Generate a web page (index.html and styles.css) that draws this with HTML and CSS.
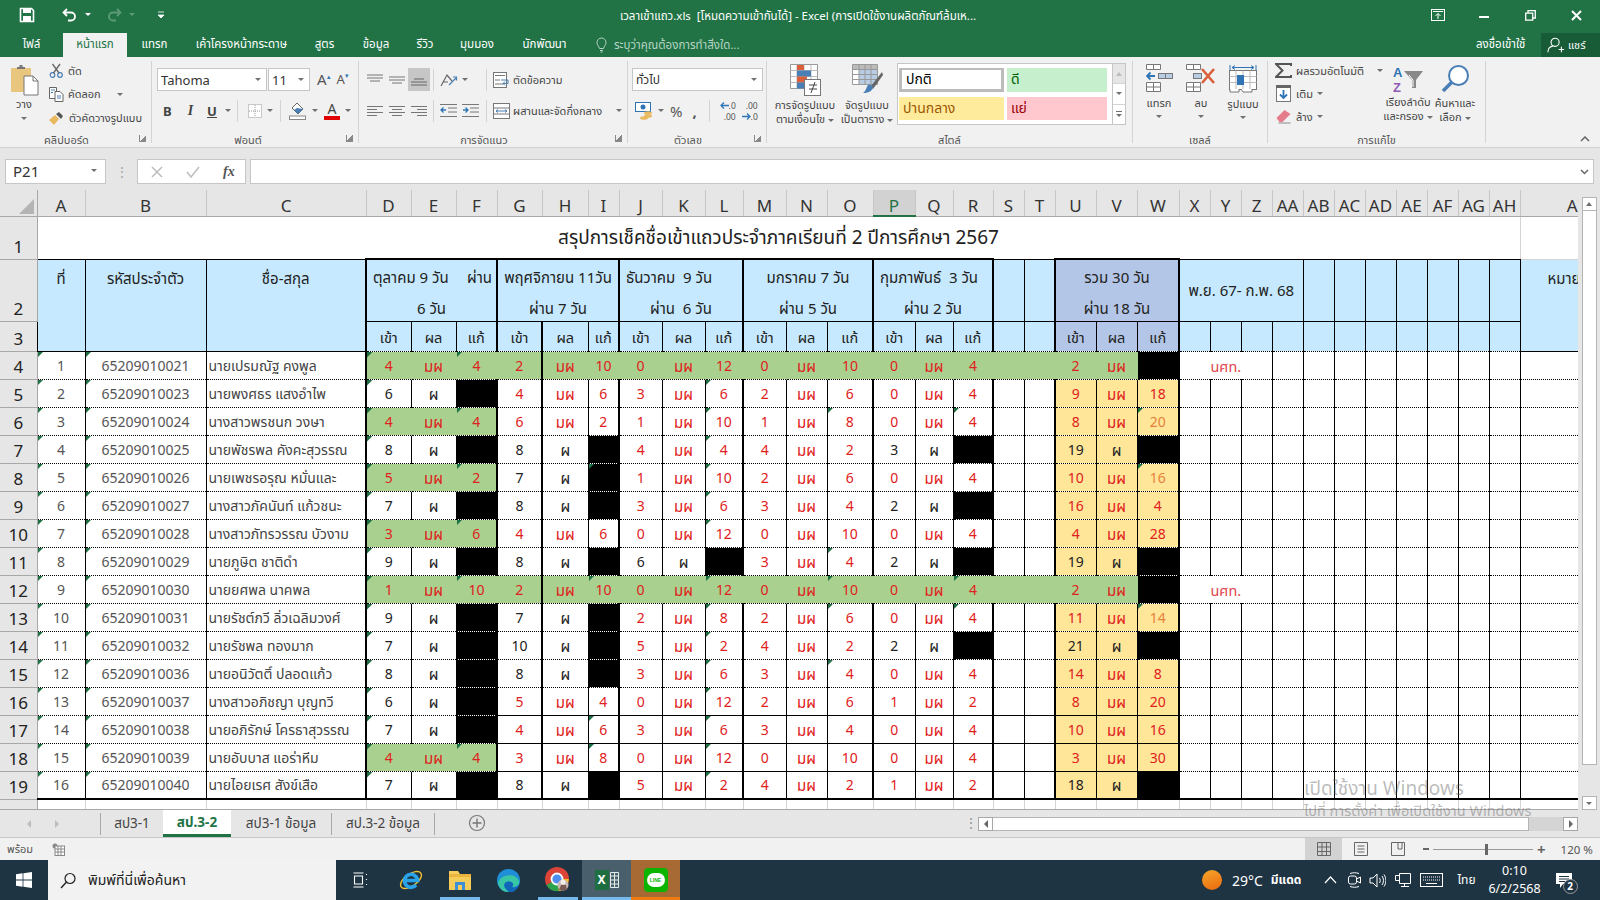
FILE: index.html
```html
<!DOCTYPE html>
<html lang="th">
<head>
    <meta charset="UTF-8">
    <title>เวลาเข้าแถว.xls - Excel</title>
    <link rel="stylesheet" href="styles.css">
</head>
<body>
    <header class="titlebar">
        <div class="qat">
            <svg class="qat-save" width="16" height="16" viewBox="0 0 16 16"><path d="M1.5 1.5h11l2 2v11h-13z" fill="none" stroke="#fff" stroke-width="1.6"/><rect x="4" y="2" width="8" height="4" fill="#fff"/><rect x="4" y="9" width="8" height="5" fill="#fff"/></svg>
            <svg class="qat-undo" width="16" height="14" viewBox="0 0 16 14"><path d="M5 1 1.5 4.5 5 8" fill="none" stroke="#fff" stroke-width="1.8"/><path d="M2 4.5h7a4 4 0 0 1 0 8H6" fill="none" stroke="#fff" stroke-width="1.8"/></svg>
            <i class="caret white"></i>
            <svg class="qat-redo" width="16" height="14" viewBox="0 0 16 14"><path d="M11 1l3.5 3.5L11 8" fill="none" stroke="#5d9a78" stroke-width="1.8"/><path d="M14 4.5H7a4 4 0 0 0 0 8h3" fill="none" stroke="#5d9a78" stroke-width="1.8"/></svg>
            <i class="caret dim"></i>
            <svg class="qat-more" width="8" height="8" viewBox="0 0 8 8"><path d="M1 1h6M1 4h6l-3 3z" fill="#fff" stroke="#fff" stroke-width=".8"/></svg>
        </div>
        <div class="doc-title">เวลาเข้าแถว.xls &nbsp;[โหมดความเข้ากันได้] - Excel (การเปิดใช้งานผลิตภัณฑ์ล้มเห...</div>
        <div class="winctl">
            <svg width="14" height="12" viewBox="0 0 14 12"><rect x=".5" y=".5" width="13" height="11" fill="none" stroke="#fff"/><path d="M2 2.5h10M7 10V4.5M4.5 7 7 4.5 9.5 7" fill="none" stroke="#fff"/></svg>
            <svg class="win-min" width="10" height="10" viewBox="0 0 10 10"><path d="M0 7h10" stroke="#fff" stroke-width="2"/></svg>
            <svg class="win-max" width="11" height="11" viewBox="0 0 11 11"><path d="M.7 3.2h7v7h-7zM3 3V.7h7.3V8H8" fill="none" stroke="#fff" stroke-width="1.3"/></svg>
            <svg class="win-close" width="11" height="11" viewBox="0 0 11 11"><path d="M1 1l9 9M10 1l-9 9" stroke="#fff" stroke-width="2"/></svg>
        </div>
    </header>

    <nav class="tabs">
        <span>ไฟล์</span>
        <span class="active">หน้าแรก</span>
        <span>แทรก</span>
        <span>เค้าโครงหน้ากระดาษ</span>
        <span>สูตร</span>
        <span>ข้อมูล</span>
        <span>รีวิว</span>
        <span>มุมมอง</span>
        <span>นักพัฒนา</span>
        <div class="tellme">
            <svg width="11" height="16" viewBox="0 0 11 16"><path d="M3.5 11.5C3 9 1 8.5 1 5.5a4.5 4.5 0 0 1 9 0c0 3-2 3.5-2.5 6zM4 13.5h3M4.5 15h2" fill="none" stroke="#b7d3c3" stroke-width="1"/></svg>
            <span>ระบุว่าคุณต้องการทำสิ่งใด...</span>
        </div>
        <span class="signin">ลงชื่อเข้าใช้</span>
        <div class="share">
            <svg width="18" height="18" viewBox="0 0 20 18"><circle cx="9" cy="6" r="4.5" fill="none" stroke="#fff" stroke-width="1.2"/><path d="M1 17c0-4 3-6.5 6-7M13 14h6M16 11v6" fill="none" stroke="#fff" stroke-width="1.2"/></svg>
            <span>แชร์</span>
        </div>
    </nav>

    <section class="ribbon">
        <div class="group g-clip">
            <div class="group-body">
                <div class="paste">
                    <svg width="29" height="31" viewBox="0 0 29 31"><path d="M1 3h20v24H1z" fill="#e9c67e"/><path d="M7 4V2h2.5V0h3v2H15v2z" fill="#777"/><path d="M14 11h9l5 5v14H14z" fill="#fff" stroke="#777"/><path d="M23 11v5h5" fill="none" stroke="#777"/></svg>
                    <span class="big-label">วาง</span>
                    <i class="caret"></i>
                </div>
                <div class="clip-list">
                    <div class="clip-row">
                        <svg width="15" height="15" viewBox="0 0 15 15"><g fill="none" stroke="#4a7fb5" stroke-width="1.2"><circle cx="3.5" cy="12" r="2.3"/><circle cx="11" cy="12" r="2.3"/></g><path d="M4.5 10 11 1M10 10 3.5 1" stroke="#666" stroke-width="1.3"/></svg>
                        <span>ตัด</span>
                    </div>
                    <div class="clip-row">
                        <svg width="15" height="15" viewBox="0 0 15 15"><g fill="#fff" stroke="#666"><path d="M.5.5h7v11h-7z"/><path d="M6 4.5h5l3 3v7H6z"/></g><path d="M2 3h4M2 5.5h2M8 9h4M8 11h4" stroke="#4a7fb5"/></svg>
                        <span>คัดลอก</span><i class="caret gap12"></i>
                    </div>
                    <div class="clip-row">
                        <svg width="16" height="14" viewBox="0 0 16 14"><path d="M0 9l6-5 4 4-5 6z" fill="#e9b95f"/><path d="M7 3l3-2 4 4-2 3z" fill="#555"/></svg>
                        <span>ตัวคัดวางรูปแบบ</span>
                    </div>
                </div>
            </div>
            <div class="group-label">คลิปบอร์ด<i class="launcher"></i></div>
        </div>

        <div class="group g-font">
            <div class="group-body stack">
                <div class="font-row">
                    <div class="combo font-name">Tahoma<i class="caret"></i></div>
                    <div class="combo font-size">11<i class="caret"></i></div>
                    <span class="grow-a">A<sup>▴</sup></span>
                    <span class="shrink-a">A<sup>▾</sup></span>
                </div>
                <div class="fmt-row">
                    <b class="f-b">B</b><em class="f-i">I</em><u class="f-u">U</u><i class="caret"></i>
                    <i class="vsep"></i>
                    <svg width="14" height="14" viewBox="0 0 14 14"><rect x=".5" y=".5" width="13" height="13" fill="#fff" stroke="#999" stroke-dasharray="1 1"/><path d="M7 1v12M1 7h12" stroke="#999" stroke-dasharray="1 1"/></svg>
                    <i class="caret"></i>
                    <i class="vsep"></i>
                    <svg width="18" height="18" viewBox="0 0 18 18"><path d="M8 1l6 6-5 5-6-6z" fill="#fff" stroke="#666"/><path d="M8 6l6 1-5 5-4-4z" fill="#4a7fb5"/><rect x=".5" y="14" width="16" height="3.5" fill="#fff" stroke="#888"/></svg>
                    <i class="caret"></i>
                    <span class="f-color">A</span>
                    <i class="caret"></i>
                </div>
            </div>
            <div class="group-label">ฟอนต์<i class="launcher"></i></div>
        </div>

        <div class="group g-align">
            <div class="group-body stack">
                <div class="align-row">
                    <span class="cell-btn"><svg width="16" height="12" viewBox="0 0 16 12"><path d="M0 1h16M0 4h16M3 7h10" stroke="#777"/></svg></span>
                    <span class="cell-btn"><svg width="16" height="12" viewBox="0 0 16 12"><path d="M0 3h16M0 6h16M3 9h10" stroke="#777"/></svg></span>
                    <span class="cell-btn on"><svg width="16" height="12" viewBox="0 0 16 12"><path d="M3 5h10M0 8h16M0 11h16" stroke="#666"/></svg></span>
                    <i class="vsep"></i>
                    <span class="orient">
                        <svg width="18" height="16" viewBox="0 0 18 16"><path d="M1 14 7 3l5 6M3 10l5 0" fill="none" stroke="#666" stroke-width="1.2"/><path d="M9 13l7-7M13 5h3.5v3.5" fill="none" stroke="#4a7fb5" stroke-width="1.2"/></svg>
                        <i class="caret"></i>
                    </span>
                    <i class="vsep"></i>
                    <span class="wide-btn">
                        <svg width="17" height="16" viewBox="0 0 17 16"><rect x=".5" y=".5" width="13" height="15" fill="#fff" stroke="#777"/><path d="M2 3.5h10M2 8h5M2 12h8" stroke="#777"/><path d="M8 8h7v3.5H10M12 9.5 10 11.5l2 2" fill="none" stroke="#4a7fb5"/></svg>
                        ตัดข้อความ
                    </span>
                </div>
                <div class="align-row">
                    <span class="cell-btn"><svg width="16" height="12" viewBox="0 0 16 12"><path d="M0 1.5h16M0 4.5h10M0 7.5h16M0 10.5h10" stroke="#777"/></svg></span>
                    <span class="cell-btn"><svg width="16" height="12" viewBox="0 0 16 12"><path d="M0 1.5h16M3 4.5h10M0 7.5h16M3 10.5h10" stroke="#777"/></svg></span>
                    <span class="cell-btn"><svg width="16" height="12" viewBox="0 0 16 12"><path d="M0 1.5h16M6 4.5h10M0 7.5h16M6 10.5h10" stroke="#777"/></svg></span>
                    <i class="vsep"></i>
                    <span class="orient indent">
                        <svg width="17" height="13" viewBox="0 0 17 13"><path d="M0 .5h17M8 4h9M8 8h9M0 12.5h17" stroke="#777"/><path d="M6 6H1M3.5 3.5 1 6l2.5 2.5" fill="none" stroke="#2f75b5" stroke-width="1.3"/></svg>
                        <svg width="17" height="13" viewBox="0 0 17 13"><path d="M0 .5h17M8 4h9M8 8h9M0 12.5h17" stroke="#777"/><path d="M1 6h5M3.5 3.5 6 6 3.5 8.5" fill="none" stroke="#2f75b5" stroke-width="1.3"/></svg>
                    </span>
                    <i class="vsep"></i>
                    <span class="wide-btn">
                        <svg width="17" height="16" viewBox="0 0 17 16"><rect x=".5" y=".5" width="16" height="15" fill="#fff" stroke="#777"/><path d="M.5 5h16M.5 11h16" stroke="#777"/><path d="M3 8h11M5 6.5 3 8l2 1.5M12 6.5 14 8l-2 1.5" fill="none" stroke="#4a7fb5"/></svg>
                        ผสานและจัดกึ่งกลาง<i class="caret gap12"></i>
                    </span>
                </div>
            </div>
            <div class="group-label">การจัดแนว<i class="launcher"></i></div>
        </div>

        <div class="group g-number">
            <div class="group-body stack">
                <div class="combo num-format">ทั่วไป<i class="caret"></i></div>
                <div class="num-row">
                    <svg width="18" height="18" viewBox="0 0 18 18"><rect x=".5" y=".5" width="15" height="9" fill="#fff" stroke="#2f75b5"/><circle cx="8" cy="5" r="2.5" fill="#2f75b5"/><ellipse cx="13" cy="11" rx="4" ry="1.8" fill="#e9b95f"/><ellipse cx="13" cy="14" rx="4" ry="1.8" fill="#e9b95f"/><ellipse cx="9" cy="16" rx="4" ry="1.8" fill="#e9b95f"/></svg>
                    <i class="caret"></i>
                    <span class="pct">%</span>
                    <span class="comma">,</span>
                    <i class="vsep"></i>
                    <span class="dec">
                        <span class="dec-line"><svg width="9" height="7" viewBox="0 0 9 7"><path d="M9 3.5H1M4 .5l-3 3 3 3" fill="none" stroke="#2f75b5" stroke-width="1.3"/></svg>.0</span>
                        <span class="dec-line">.00</span>
                    </span>
                    <span class="dec">
                        <span class="dec-line">.00</span>
                        <span class="dec-line"><svg width="9" height="7" viewBox="0 0 9 7"><path d="M0 3.5h8M5 .5l3 3-3 3" fill="none" stroke="#2f75b5" stroke-width="1.3"/></svg>.0</span>
                    </span>
                </div>
            </div>
            <div class="group-label">ตัวเลข<i class="launcher"></i></div>
        </div>

        <div class="group g-style">
            <div class="group-body">
                <div class="big-btn w-cond">
                    <svg width="31" height="32" viewBox="0 0 31 32"><path d="M.5.5h27v24H.5z" fill="#fff" stroke="#999"/><path d="M7 .5v24M14 .5v24M21 .5v24M.5 6.5h27M.5 12.5h27M.5 18.5h27" stroke="#bbb"/><rect x="7" y="1" width="7" height="5" fill="#d9603b"/><rect x="7" y="6.5" width="14" height="6" fill="#4a7fb5"/><rect x="7" y="12.5" width="10" height="6" fill="#d9603b"/><rect x="7" y="18.5" width="7" height="6" fill="#4a7fb5"/><rect x="14.5" y="15.5" width="16" height="16" fill="#fff" stroke="#777"/><path d="M19 21h8M19 25h8M25 18l-4 11" stroke="#444" fill="none"/></svg>
                    <span>การจัดรูปแบบ</span>
                    <span>ตามเงื่อนไข<i class="caret gap3"></i></span>
                </div>
                <div class="big-btn w-table">
                    <svg width="31" height="32" viewBox="0 0 31 32"><path d="M.5.5h25v20H.5z" fill="#fff" stroke="#999"/><rect x="1" y="1" width="24" height="4" fill="#bbb"/><rect x="7" y="6" width="18" height="14" fill="#b8cce4"/><path d="M7 .5v20M13 .5v20M19 .5v20M.5 5.5h25M.5 10.5h25M.5 15.5h25" stroke="#999"/><path d="M30 8 19 22l2 3L31 11z" fill="#666"/><path d="M16 21c3-1 5 1 5 3-1 3-5 5-10 5 3-2 3-5 5-8z" fill="#4a7fb5"/></svg>
                    <span>จัดรูปแบบ</span>
                    <span>เป็นตาราง<i class="caret gap3"></i></span>
                </div>
                <div class="gallery">
                    <div class="gallery-cells">
                        <span class="st-normal">ปกติ</span>
                        <span class="st-good">ดี</span>
                        <span class="st-neutral">ปานกลาง</span>
                        <span class="st-bad">แย่</span>
                    </div>
                    <div class="gallery-scroll">
                        <span><i class="caret up dim2"></i></span>
                        <span><i class="caret"></i></span>
                        <span class="last"><i class="bar"></i><i class="caret"></i></span>
                    </div>
                </div>
            </div>
            <div class="group-label">สไตล์</div>
        </div>

        <div class="group g-cells">
            <div class="group-body">
                <div class="big-btn w-cell">
                    <svg width="27" height="28" viewBox="0 0 27 28"><g fill="#fff" stroke="#777"><path d="M.5.5h7v5h-7zM7.5.5h7v5h-7z"/><path d="M.5 18.5h7v9h-7zM7.5 18.5h7v9h-7z"/><path d="M.5 23h14"/></g><path d="M1 12h8M4.5 8.5 1 12l3.5 3.5" fill="none" stroke="#2f75b5" stroke-width="1.8"/><g fill="#b8cce4" stroke="#777"><rect x="12.5" y="9.5" width="7" height="5"/><rect x="19.5" y="9.5" width="7" height="5"/></g></svg>
                    <span>แทรก</span>
                    <i class="caret low"></i>
                </div>
                <div class="big-btn w-cell">
                    <svg width="30" height="28" viewBox="0 0 30 28"><g fill="#fff" stroke="#777"><path d="M.5.5h7v5h-7zM7.5.5h7v5h-7z"/><path d="M.5 18.5h7v9h-7zM7.5 18.5h7v9h-7z"/><path d="M.5 23h14"/></g><rect x="7.5" y="9.5" width="8" height="5" fill="#b8cce4" stroke="#777"/><path d="M16 5l12 14M28 5 16 19" stroke="#d9603b" stroke-width="2.6"/></svg>
                    <span>ลบ</span>
                    <i class="caret low"></i>
                </div>
                <div class="big-btn w-cell">
                    <svg width="28" height="29" viewBox="0 0 28 29"><path d="M1 1v5M27 1v5" stroke="#2f75b5"/><path d="M3 3.5h22M6 1.5 3 3.5l3 2M22 1.5l3 2-3 2" fill="none" stroke="#2f75b5"/><rect x=".5" y="6.5" width="27" height="19" fill="#fff" stroke="#777"/><path d="M7 6.5v19M14 6.5v19M21 6.5v19M.5 12.5h27M.5 18.5h27" stroke="#bbb"/><rect x="8" y="11" width="7" height="10" fill="#2f75b5"/><path d="M1 25v3h9v-3M12 25l2 3h9v-3" fill="#fff" stroke="#777"/></svg>
                    <span>รูปแบบ</span>
                    <i class="caret low"></i>
                </div>
            </div>
            <div class="group-label">เซลล์</div>
        </div>

        <div class="group g-edit">
            <div class="group-body">
                <div class="edit-list">
                    <div class="edit-row">
                        <svg width="17" height="15" viewBox="0 0 17 15"><path d="M16 3V1H1l6.5 6.5L1 14h15v-2" fill="none" stroke="#555" stroke-width="2"/></svg>
                        <span>ผลรวมอัตโนมัติ</span><i class="caret gap-sum"></i>
                    </div>
                    <div class="edit-row">
                        <svg width="15" height="17" viewBox="0 0 15 17"><rect x=".5" y=".5" width="14" height="16" fill="#fff" stroke="#777"/><rect x="0" y="0" width="15" height="3" fill="#666"/><path d="M7.5 5v8M4 9.5l3.5 3.5L11 9.5" fill="none" stroke="#2f75b5" stroke-width="1.8"/></svg>
                        <span>เติม</span><i class="caret"></i>
                    </div>
                    <div class="edit-row">
                        <svg width="16" height="15" viewBox="0 0 16 15"><path d="M1 9l8-8 6 4-8 8H4z" fill="#e57b8b"/><path d="M3 14h12" stroke="#888"/></svg>
                        <span>ล้าง</span><i class="caret"></i>
                    </div>
                </div>
                <div class="big-btn w-sort">
                    <svg width="31" height="29" viewBox="0 0 31 29"><text x="0" y="13" class="sort-a">A</text><text x="0" y="28" class="sort-z">Z</text><path d="M11 7h19l-7 9v8h-4v-8z" fill="#888"/><path d="M16 11l4 5v7" fill="none" stroke="#fff"/></svg>
                    <span>เรียงลำดับ</span>
                    <span>และกรอง<i class="caret gap3"></i></span>
                </div>
                <div class="big-btn w-find">
                    <svg width="29" height="30" viewBox="0 0 29 30"><circle cx="17.5" cy="11.5" r="9.5" fill="#fff" stroke="#4a7fb5" stroke-width="2"/><path d="M10.5 18.5 2 27" stroke="#4a7fb5" stroke-width="3.5"/></svg>
                    <span>ค้นหาและ</span>
                    <span>เลือก<i class="caret gap3"></i></span>
                </div>
            </div>
            <div class="group-label">การแก้ไข</div>
        </div>

        <svg class="collapse" width="10" height="6" viewBox="0 0 10 6"><path d="M1 5l4-4 4 4" fill="none" stroke="#666" stroke-width="1.5"/></svg>
    </section>

    <section class="formula-bar">
        <div class="name-box">P21<i class="caret"></i></div>
        <span class="fx-dots">⋮</span>
        <div class="fx-btns">
            <svg width="12" height="12" viewBox="0 0 12 12"><path d="M1 1l10 10M11 1 1 11" stroke="#bdbdbd" stroke-width="1.5"/></svg>
            <svg width="14" height="12" viewBox="0 0 14 12"><path d="M1 6l4 5 8-10" fill="none" stroke="#bdbdbd" stroke-width="1.5"/></svg>
            <em>fx</em>
        </div>
        <div class="fx-input"><svg width="9" height="6" viewBox="0 0 9 6"><path d="M1 1l3.5 3.5L8 1" fill="none" stroke="#666" stroke-width="1.5"/></svg></div>
    </section>

    <section class="sheet-area">
        <div class="grid-viewport">
            <table class="sheet" id="sheet"></table>
        </div>
        <div class="vscroll">
            <span class="vs-btn"><i class="caret up"></i></span>
            <span class="vs-thumb"></span>
            <span class="vs-btn"><i class="caret"></i></span>
        </div>
    </section>

    <section class="sheet-tabs">
        <div class="tab-nav"><i class="arrow-l"></i><i class="arrow-r"></i></div>
        <span class="sheet-tab">สป3-1</span>
        <span class="sheet-tab active">สป.3-2</span>
        <span class="sheet-tab">สป3-1 ข้อมูล</span>
        <span class="sheet-tab">สป.3-2 ข้อมูล</span>
        <svg class="tab-add" width="18" height="18" viewBox="0 0 18 18"><circle cx="9" cy="9" r="7.5" fill="none" stroke="#777" stroke-width="1.2"/><path d="M9 4.5v9M4.5 9h9" stroke="#777" stroke-width="1.4"/></svg>
        <span class="fx-dots tab-grip">⋮</span>
        <div class="hscroll">
            <span class="hs-btn"><i class="arrow-l dark"></i></span>
            <span class="hs-thumb"></span>
            <span class="hs-track"></span>
            <span class="hs-btn"><i class="arrow-r dark"></i></span>
        </div>
    </section>

    <footer class="statusbar">
        <span class="ready">พร้อม</span>
        <svg width="13" height="13" viewBox="0 0 13 13"><circle cx="3" cy="3" r="2.5" fill="#888"/><rect x="3" y="3" width="9.5" height="9.5" fill="#fff" stroke="#888"/><path d="M3 6h9.5M3 9h9.5M6 3v9.5M9 3v9.5" stroke="#888"/></svg>
        <div class="view-btns">
            <span class="view on"><svg width="14" height="14" viewBox="0 0 14 14"><path d="M.5.5h13v13H.5zM5 .5v13M9.5.5v13M.5 5h13M.5 9.5h13" fill="none" stroke="#666"/></svg></span>
            <span class="view"><svg width="14" height="14" viewBox="0 0 14 14"><path d="M.5.5h13v13H.5zM3.5 4h7M3.5 7h7M3.5 10h7" fill="none" stroke="#666"/></svg></span>
            <span class="view"><svg width="14" height="14" viewBox="0 0 14 14"><path d="M.5.5h13v13H.5zM7 .5V7h4V.5" fill="none" stroke="#666"/></svg></span>
        </div>
        <div class="zoom-ctl">
            <i class="z-minus"></i>
            <span class="z-track"><i class="z-thumb"></i></span>
            <span class="z-plus">+</span>
            <span class="z-value">120 %</span>
        </div>
    </footer>

    <footer class="taskbar">
        <span class="start">
            <svg width="16" height="16" viewBox="0 0 16 16"><path d="M0 2.2 6.6 1.3v6.2H0zM7.4 1.2 16 0v7.500H7.400zM0 8.500h6.600v6.200L0 13.800zM7.400 8.500H16V16l-8.600-1.200z" fill="#fff"/></svg>
        </span>
        <div class="search">
            <svg width="16" height="17" viewBox="0 0 16 17"><circle cx="10" cy="6.5" r="5" fill="none" stroke="#222" stroke-width="1.2"/><path d="M6.5 10 1 16" stroke="#222" stroke-width="1.4"/></svg>
            <span>พิมพ์ที่นี่เพื่อค้นหา</span>
        </div>
        <span class="task first">
            <svg width="16" height="16" viewBox="0 0 16 16"><path d="M1.5 1h10M1.5 15h10M2.5 4h8v8h-8zM14.5 2v1M14.5 7v1M14.5 12v1" fill="none" stroke="#fff" stroke-width="1.1"/></svg>
        </span>
        <span class="task">
            <svg width="24" height="24" viewBox="0 0 24 24"><ellipse cx="12" cy="12" rx="12" ry="6" transform="rotate(-35 12 12)" fill="none" stroke="#f2c230" stroke-width="1.4"/><path d="M5.5 12.5h13A6.5 6.5 0 1 0 17 17" fill="none" stroke="#2aa3e8" stroke-width="3.6"/></svg>
        </span>
        <span class="task open">
            <svg width="22" height="19" viewBox="0 0 22 19"><path d="M0 0h9l2 3h11v16H0z" fill="#f6cd5b"/><path d="M0 3h22v3H0z" fill="#eab53e"/><rect x="6" y="11" width="10" height="8" fill="#3f8fd6"/><rect x="9" y="14" width="4" height="5" fill="#f6cd5b"/></svg>
        </span>
        <span class="task">
            <svg width="23" height="23" viewBox="0 0 23 23"><circle cx="11.5" cy="11.5" r="11.5" fill="#1e8ed8"/><path d="M1 14C3 5 19 3 22 12c1 4-3 6-7 6 3-3 0-6-4-5.5C7 13 6 17 9 20c1 1 3 2.5 5 2.8C7 24 2 20 1 14z" fill="#38c6a4"/><path d="M9 20c-3-3-2-7 2-7.5 4-.5 7 2.5 4 5.5 2 1 5 0 6.5-2-1 4-4 7-8 7.5-1.5-.3-3.5-2-4.5-3.5z" fill="#1266b8"/></svg>
        </span>
        <span class="task open">
            <svg width="26" height="26" viewBox="0 0 26 26"><circle cx="12" cy="12" r="12" fill="#db4437"/><path d="M12 12 1.5 18A12 12 0 0 0 14 24z" fill="#2ba24c"/><path d="M12 12h11.8A12 12 0 0 1 14 24z" fill="#f7c325"/><circle cx="12" cy="12" r="5.5" fill="#4d8fee" stroke="#fff" stroke-width="1.8"/><circle cx="18" cy="18" r="5.5" fill="#c9b9b4"/><circle cx="18" cy="15" r="2.5" fill="#f3eeea"/><path d="M14 23l2-5h5l1 5z" fill="#7a5a52"/></svg>
        </span>
        <span class="task open active">
            <span class="xl-mark"><b>X</b></span>
            <svg width="9" height="16" viewBox="0 0 9 16"><path d="M.5.5h8v15h-8zM.5 4h8M.5 8h8M.5 12h8M4.5.5v15" fill="none" stroke="#dfeee6"/></svg>
        </span>
        <span class="task open line">
            <span class="line-mark"><b>LINE</b></span>
        </span>
        <div class="tray">
            <i class="sun"></i>
            <span class="temp">29°C</span>
            <span class="weather">มีแดด</span>
            <svg class="t-up" width="13" height="8" viewBox="0 0 13 8"><path d="M1 7l5.5-6L12 7" fill="none" stroke="#fff" stroke-width="1.2"/></svg>
            <svg class="t-meet" width="15" height="18" viewBox="0 0 15 18"><rect x="1.5" y="5" width="8" height="8" rx="2" fill="none" stroke="#fff"/><path d="M9.5 8l4-2v6l-4-2M3 2.5c3-1 6-1 9 0M3 15.5c3 1 6 1 9 0" fill="none" stroke="#fff"/></svg>
            <svg class="t-vol" width="17" height="15" viewBox="0 0 17 15"><path d="M1 5h3l4-4v13l-4-4H1zM10.5 5c1 1.5 1 3.5 0 5M13 3c2 2.5 2 6.5 0 9M15 1.5c2.5 3.5 2.5 8.5 0 12" fill="none" stroke="#fff"/></svg>
            <svg class="t-net" width="16" height="16" viewBox="0 0 16 16"><path d="M4.5 1.5h11v10h-11zM.5 3.5h4v5h-4zM9.5 11.5v3M6 14.5h8" fill="none" stroke="#fff"/></svg>
            <svg class="t-kbd" width="23" height="14" viewBox="0 0 23 14"><rect x=".5" y=".5" width="22" height="13" fill="none" stroke="#fff"/><path d="M3 4h17M3 7h17" stroke="#fff" stroke-dasharray="1 1"/><path d="M6 10.5h11" stroke="#fff"/></svg>
            <span class="lang">ไทย</span>
            <div class="clock"><span>0:10</span><span>6/2/2568</span></div>
            <span class="notify">
                <svg width="16" height="15" viewBox="0 0 16 15"><path d="M0 0h16v11H7l-3 4v-4H0z" fill="#fff"/><path d="M3 3.5h10M3 6h10M3 8.5h6" stroke="#1f3442"/></svg>
                <b class="badge">2</b>
            </span>
        </div>
    </footer>

    <div class="watermark">
        <span class="wm-big">เปิดใช้งาน Windows</span>
        <span class="wm-small">ไปที่ การตั้งค่า เพื่อเปิดใช้งาน Windows</span>
    </div>

    <script>
        const cols = [['', 37], ['A', 48], ['B', 121], ['C', 160], ['D', 45], ['E', 45], ['F', 41],
            ['G', 45], ['H', 46], ['I', 31], ['J', 43], ['K', 43], ['L', 38], ['M', 43], ['N', 41], ['O', 46],
            ['P', 42], ['Q', 38], ['R', 40], ['S', 31], ['T', 31], ['U', 41], ['V', 41], ['W', 42],
            ['X', 31], ['Y', 31], ['Z', 31], ['AA', 31], ['AB', 31], ['AC', 31], ['AD', 31], ['AE', 31],
            ['AF', 31], ['AG', 31], ['AH', 31], ['AI', 110]];
        const letters = cols.slice(1).map(c => c[0]);
        const thickLeft = ['D', 'G', 'H', 'J', 'M', 'P', 'S', 'U', 'X'];

        // "4/4" = เข้า/แก้ ไม่ผ่าน, "6" = ผ่าน, "2/-" = ไม่ผ่าน ช่องแก้ดำ
        const students = [
            ['65209010021', 'นายเปรมณัฐ คงพูล', '4/4 2/10 0/12 0/10 0/4 2/-'],
            ['65209010023', 'นายพงศธร แสงอำไพ', '6 4/6 3/6 2/6 0/4 9/18'],
            ['65209010024', 'นางสาวพรชนก วงษา', '4/4 6/2 1/10 1/8 0/4 8/20'],
            ['65209010025', 'นายพัชรพล คังคะสุวรรณ', '8 8 4/4 4/2 3 19'],
            ['65209010026', 'นายเพชรอรุณ หมั่นและ', '5/2 7 1/10 2/6 0/4 10/16'],
            ['65209010027', 'นางสาวภัคนันท์ แก้วชนะ', '7 8 3/6 3/4 2 16/4'],
            ['65209010028', 'นางสาวภัทรวรรณ บัวงาม', '3/6 4/6 0/12 0/10 0/4 4/28'],
            ['65209010029', 'นายภูษิต ชาติดำ', '9 8 6 3/4 2 19'],
            ['65209010030', 'นายยศพล นาคพล', '1/10 2/10 0/12 0/10 0/4 2/-'],
            ['65209010031', 'นายรัชต์ภวี ลิ่วเฉลิมวงศ์', '9 7 2/8 2/6 0/4 11/14'],
            ['65209010032', 'นายรัชพล ทองมาก', '7 10 5/2 4/2 2 21'],
            ['65209010036', 'นายอนิวัตติ์ ปลอดแก้ว', '8 8 3/6 3/4 0/4 14/8'],
            ['65209010037', 'นางสาวอภิชญา บุญทวี', '6 5/4 0/12 2/6 1/2 8/20'],
            ['65209010038', 'นายอภิรักษ์ โครธาสุวรรณ', '7 4/6 3/6 3/4 0/4 10/16'],
            ['65209010039', 'นายอับบาส แอร่าหีม', '4/4 3/8 0/12 0/10 0/4 3/30'],
            ['65209010040', 'นายไอยเรศ สังข์เสือ', '7 8 5/2 4/2 1/2 18']
        ];
        const greenAll = [1, 9];
        const greenFirst = [1, 3, 5, 7, 9, 15];
        const notes = [1, 9];
        const corners = {
            F: greenFirst,
            I: [5, 9, 14, 15],
            L: [2, 3, 4, 5, 6, 7, 9, 10, 11, 12, 13, 14, 15, 16],
            O: [3, 8, 9, 10, 12],
            R: [3, 9, 10],
            W: [3, 5, 10]
        };
        const pale = [3, 5, 10];

        function td(cls, text, attrs) {
            return `<td class="${cls}" ${attrs || ''}>${text === undefined ? '' : text}</td>`;
        }

        function dataCell(letter, row, text, extra) {
            const all = greenAll.includes(row);
            let cls = 'data ' + (extra || '');
            let thick = thickLeft.includes(letter);
            if (all && !['D', 'H', 'X'].includes(letter)) thick = false;
            if (thick) cls += ' tl';
            if (all && letter >= 'D' && letter.length === 1 && letter <= 'W') cls += ' gr';
            if (greenFirst.includes(row) && 'DEF'.includes(letter)) cls += ' gr';
            if (letter === 'D' || letter === 'A' || letter === 'B') cls += ' tri';
            if (corners[letter] && corners[letter].includes(row)) cls += ' tri';
            if (row >= 14 && letters.indexOf(letter) >= letters.indexOf('G') && letters.indexOf(letter) <= letters.indexOf('W')) cls += ' solid';
            return td(cls, text);
        }

        function groupCells(letterSet, row, value, total) {
            const parts = value.split('/');
            const failed = parts.length > 1;
            const inCls = failed ? 'red' : 'ok';
            const base = total && !greenAll.includes(row) ? 'orange ' : '';
            let html = dataCell(letterSet[0], row, parts[0], base + inCls);
            html += dataCell(letterSet[1], row, failed ? 'มผ' : 'ผ', base + (failed ? 'red mark' : 'ok mark'));
            if (failed && parts[1] !== '-') {
                const soft = total && pale.includes(row) ? ' pale' : '';
                html += dataCell(letterSet[2], row, parts[1], base + 'red' + soft);
            } else {
                html += dataCell(letterSet[2], row, '', 'black');
            }
            return html;
        }

        function buildSheet() {
            let html = '<colgroup>' + cols.map(c => `<col style="width:${c[1]}px">`).join('') + '</colgroup>';

            html += '<tr class="r-head"><th class="corner"><svg width="15" height="15" viewBox="0 0 15 15"><path d="M15 0v15H0z" fill="#b4b4b4"/></svg></th>';
            html += letters.map(l => `<th class="col${l === 'P' ? ' sel' : ''}">${l}</th>`).join('') + '</tr>';

            html += '<tr class="r-title"><th class="rowno">1</th>' + td('title', 'สรุปการเช็คชื่อเข้าแถวประจำภาคเรียนที่ 2 ปีการศึกษา 2567', 'colspan="34"') + td('grid') + '</tr>';

            const months = [
                ['<span class="spread"><span>ตุลาคม 9 วัน</span><span>ผ่าน</span></span>', '6 วัน'],
                ['พฤศจิกายน 11วัน', 'ผ่าน 7 วัน'],
                ['<span class="spread"><span>ธันวาคม&nbsp; 9 วัน</span></span>', 'ผ่าน&nbsp; 6 วัน'],
                ['มกราคม 7 วัน', 'ผ่าน 5 วัน'],
                ['<span class="spread"><span>กุมภาพันธ์&nbsp; 3 วัน</span></span>', 'ผ่าน 2 วัน']
            ];
            html += '<tr class="r-months"><th class="rowno">2</th>';
            html += td('hd top', 'ที่', 'rowspan="2"') + td('hd top', 'รหัสประจำตัว', 'rowspan="2"') + td('hd top', 'ชื่อ-สกุล', 'rowspan="2"');
            months.forEach(m => {
                html += td('hd tl box', `<div class="two">${m[0]}</div><div class="two">${m[1]}</div>`, 'colspan="3"');
            });
            html += td('hd tl') + td('hd');
            html += td('hd tl box sum', '<div class="two">รวม 30 วัน</div><div class="two">ผ่าน 18 วัน</div>', 'colspan="3"');
            html += td('hd tl', 'พ.ย. 67- ก.พ. 68', 'colspan="4"');
            ['AB', 'AC', 'AD', 'AE', 'AF', 'AG', 'AH'].forEach(() => { html += td('hd'); });
            html += td('hd top note-hd', 'หมายเหตุ', 'rowspan="2"') + '</tr>';

            html += '<tr class="r-sub"><th class="rowno">3</th>';
            for (let i = 0; i < 5; i++) {
                html += td('hd sub tl', 'เข้า') + td('hd sub' + (i === 1 ? ' tl' : ''), 'ผล') + td('hd sub', 'แก้');
            }
            html += td('hd sub tl') + td('hd sub');
            html += td('hd sub tl sum', 'เข้า') + td('hd sub sum', 'ผล') + td('hd sub sum', 'แก้');
            html += td('hd sub tl');
            for (let i = 0; i < 10; i++) html += td('hd sub');
            html += '</tr>';

            students.forEach((s, i) => {
                const row = i + 1;
                const vals = s[2].split(' ');
                html += `<tr class="r-data"><th class="rowno">${row + 3}</th>`;
                html += dataCell('A', row, row, 'dim num') + dataCell('B', row, s[0], 'dim num') + dataCell('C', row, s[1], 'name');
                ['DEF', 'GHI', 'JKL', 'MNO', 'PQR'].forEach((g, n) => { html += groupCells(g, row, vals[n]); });
                html += dataCell('S', row) + dataCell('T', row);
                html += groupCells('UVW', row, vals[5], true);
                const rest = letters.slice(letters.indexOf('X'));
                if (notes.includes(row)) {
                    html += `<td class="data tl ncc" colspan="3">นศท.</td>`;
                    rest.slice(3).forEach(l => { html += dataCell(l, row); });
                } else {
                    rest.forEach(l => { html += dataCell(l, row); });
                }
                html += '</tr>';
            });

            html += '<tr class="r-data r-end"><th class="rowno">20</th>' + letters.map(() => td('grid')).join('') + '</tr>';
            document.getElementById('sheet').innerHTML = html;
        }

        buildSheet();
    </script>
</body>
</html>
```

FILE: styles.css
```css
* {
    box-sizing: border-box;
}

html, body {
    margin: 0;
    height: 100%;
}

body {
    width: 1600px;
    height: 900px;
    overflow: hidden;
    display: flex;
    flex-direction: column;
    position: relative;
    font-family: "Noto Sans", "Noto Sans Thai", "Liberation Sans", sans-serif;
    font-size: 12px;
    color: #444;
    background: #f1f1f1;
}

svg {
    display: block;
    flex: none;
}

i {
    font-style: normal;
}

/* small helpers */
.caret {
    display: inline-block;
    width: 0;
    height: 0;
    flex: none;
    border-left: 3px solid transparent;
    border-right: 3px solid transparent;
    border-top: 3px solid #707070;
    vertical-align: middle;
}

.caret.up {
    border-top: 0;
    border-bottom: 4px solid #707070;
}

.caret.up.dim2 {
    border-bottom-color: #bcbcbc;
}

.caret.white {
    border-top-color: #fff;
}

.caret.dim {
    border-top-color: #5d9a78;
}

.gap3 { margin-left: 3px; }
.gap12 { margin-left: 12px; }

.vsep {
    display: block;
    flex: none;
    width: 1px;
    height: 22px;
    background: #d4d4d4;
}

.launcher {
    position: absolute;
    right: 5px;
    bottom: 5px;
    width: 7px;
    height: 7px;
    border-left: 1px solid #888;
    border-bottom: 1px solid #888;
    background: linear-gradient(135deg, transparent 50%, #888 50%);
}

/* title bar */
.titlebar {
    flex: none;
    height: 33px;
    background: #217346;
    color: #fff;
    display: grid;
    grid-template-columns: 1fr auto 1fr;
    align-items: center;
}

.qat {
    display: flex;
    align-items: center;
    padding: 0 0 4px 19px;
}

.qat-undo { margin-left: 27px; }
.qat .caret { margin-left: 7px; }
.qat-redo { margin-left: 15px; }
.qat-more { margin-left: 22px; }

.doc-title {
    font-size: 11.5px;
    white-space: pre;
    text-align: center;
    margin-right: 4px;
}

.winctl {
    display: flex;
    align-items: center;
    justify-content: flex-end;
    padding: 0 18px 3px 0;
    gap: 34px;
}

.win-max { margin-left: 2px; }
.win-close { margin-left: 1px; }

/* ribbon tabs */
.tabs {
    flex: none;
    height: 24px;
    background: #217346;
    color: #fff;
    display: grid;
    grid-template-columns: 63px 64px 55px 119px 47px 56px 42px 62px 73px 1fr 65px 59px;
    align-items: stretch;
    font-size: 11.5px;
    line-height: 22px;
    text-align: center;
    white-space: nowrap;
}

.tabs .active {
    background: #f1f1f1;
    color: #217346;
}

.tellme {
    display: flex;
    align-items: center;
    gap: 7px;
    padding-left: 15px;
    color: #b7d3c3;
    text-align: left;
}

.signin {
    text-align: left;
}

.share {
    display: flex;
    align-items: center;
    gap: 3px;
    padding-left: 6px;
    background: #185c37;
    font-size: 11px;
}

/* ribbon */
.ribbon {
    flex: none;
    height: 91px;
    display: flex;
    position: relative;
    padding-top: 4px;
    background: #f1f1f1;
    border-bottom: 1px solid #d2d2d2;
    white-space: nowrap;
    line-height: 14px;
    font-size: 11px;
}

.group {
    flex: none;
    height: 82px;
    position: relative;
    border-right: 1px solid #d4d4d4;
}

.g-clip { width: 152px; }
.g-font { width: 207px; }
.g-align { width: 269px; }
.g-number { width: 139px; }
.g-style { width: 366px; }
.g-cells { width: 135px; }
.g-edit { width: 218px; }

.group-body {
    height: 73px;
    display: flex;
}

.group-body.stack {
    flex-direction: column;
    gap: 8px;
    padding-top: 7px;
}

.group-label {
    height: 14px;
    font-size: 11px;
    text-align: center;
    color: #555;
    margin-top: -1px;
}

.group-label .launcher {
    bottom: 1px;
}

.g-clip .group-label { padding-right: 18px; }
.g-font .group-label { padding-right: 14px; }
.g-align .group-label { padding-right: 18px; }
.g-number .group-label { padding-right: 18px; }

.paste {
    width: 48px;
    display: flex;
    flex-direction: column;
    align-items: center;
    padding-top: 4px;
}

.big-label {
    margin-top: 1px;
}

.paste .caret {
    margin-top: 6px;
}

.clip-list {
    margin-top: -2px;
    padding-left: 1px;
}

.clip-row {
    height: 23.5px;
    display: flex;
    align-items: center;
    gap: 4px;
}

.combo {
    flex: none;
    height: 23px;
    display: flex;
    align-items: center;
    justify-content: space-between;
    padding: 0 5px 0 3px;
    background: #fff;
    border: 1px solid #c6c6c6;
    font-size: 12px;
    color: #333;
}

.font-row {
    display: flex;
    align-items: center;
    padding-left: 5px;
    height: 23px;
}

.font-name { width: 110px; font-size: 13px; }
.font-size { width: 42px; margin-left: 1px; font-size: 13px; }

.grow-a, .shrink-a {
    color: #555;
    font-size: 15px;
    line-height: 15px;
    white-space: nowrap;
}

.grow-a { margin-left: 7px; }
.shrink-a { margin-left: 6px; font-size: 13px; }

.grow-a sup, .shrink-a sup {
    font-size: 7px;
    color: #2f75b5;
    vertical-align: 6px;
    line-height: 0;
}

.fmt-row {
    display: flex;
    align-items: center;
    height: 23px;
    padding-left: 11px;
}

.f-b, .f-i, .f-u {
    flex: none;
    font-size: 13px;
    color: #444;
}

.f-b { font-weight: 700; }
.f-i { margin-left: 16px; font-family: "Liberation Serif", serif; font-size: 14px; font-weight: 700; }
.f-u { margin-left: 14px; font-weight: 700; }
.f-u + .caret { margin-left: 8px; }
.fmt-row .vsep { margin: 0 10px 0 6px; }
.fmt-row svg + .caret { margin-left: 5px; }
.fmt-row svg + .caret + .vsep { margin: 0 8px 0 7px; }

.f-color {
    margin-left: 6px;
    width: 16px;
    text-align: center;
    font-size: 14px;
    line-height: 15px;
    border-bottom: 4px solid #e00000;
    color: #444;
}

.f-color + .caret { margin-left: 5px; }

.align-row {
    display: flex;
    align-items: center;
    height: 23px;
    padding-left: 5px;
}

.cell-btn {
    flex: none;
    width: 22px;
    height: 23px;
    display: flex;
    align-items: center;
    justify-content: center;
}

.cell-btn.on {
    background: #c6c6c6;
}

.align-row .vsep {
    margin: 0 0 0 3px;
}

.orient {
    flex: none;
    width: 52px;
    display: flex;
    align-items: center;
    gap: 4px;
    padding-left: 6px;
}

.orient.indent {
    gap: 5px;
}

.align-row .orient + .vsep {
    margin: 0;
}

.wide-btn {
    display: flex;
    align-items: center;
    gap: 3px;
    padding-left: 6px;
}

.wide-btn .gap12 {
    margin-left: 11px;
}

.group-body .num-format {
    width: 131px;
    margin-left: 4px;
}

.num-row {
    display: flex;
    align-items: center;
    height: 23px;
    padding-left: 7px;
}

.num-row .caret { margin-left: 5px; }

.pct {
    margin-left: 6px;
    font-size: 15px;
    color: #555;
}

.comma {
    margin-left: 10px;
    font-size: 15px;
    font-weight: 700;
    color: #555;
    line-height: 10px;
}

.num-row .vsep { margin: 0 6px 0 12px; }

.dec {
    flex: none;
    width: 20px;
    margin-right: 2px;
    display: flex;
    flex-direction: column;
    align-items: flex-end;
    font-size: 8.5px;
    line-height: 11px;
    color: #555;
}

.dec-line {
    display: flex;
    align-items: center;
}

.big-btn {
    flex: none;
    display: flex;
    flex-direction: column;
    align-items: center;
    padding-top: 3px;
    font-size: 11px;
    line-height: 14px;
}

.big-btn svg { margin-bottom: 2px; }

.big-btn .low { margin-top: 5px; }

.w-cond { width: 62px; margin-left: 7px; }
.w-table { width: 62px; }

.gallery {
    margin: 2px 0 0 -1px;
    width: 229px;
    height: 62px;
    display: flex;
    background: #fff;
    border: 1px solid #c6c6c6;
}

.gallery-cells {
    width: 214px;
    display: grid;
    grid-template-columns: 105px 100px;
    grid-template-rows: 24px 23px;
    gap: 5px 3px;
    padding: 4px 0 0 1px;
    font-size: 14px;
    line-height: 22px;
}

.gallery-cells span {
    padding-left: 4px;
}

.st-normal { color: #000; border: 3px solid #bcbcbc; border-top-width: 2px; line-height: 17px; }
.st-good { background: #c6efce; color: #006100; }
.st-neutral { background: #ffeb9c; color: #9c5700; }
.st-bad { background: #ffc7ce; color: #9c0006; }

.gallery-scroll {
    flex: 1;
    display: flex;
    flex-direction: column;
    border-left: 1px solid #c6c6c6;
}

.gallery-scroll span {
    flex: 1;
    display: flex;
    flex-direction: column;
    gap: 2px;
    align-items: center;
    justify-content: center;
    border-bottom: 1px solid #d4d4d4;
}

.gallery-scroll span:first-child {
    background: #e6e6e6;
}

.gallery-scroll .last {
    border-bottom: 0;
}

.gallery-scroll .bar {
    width: 6px;
    height: 1px;
    background: #707070;
}

.w-cell {
    width: 42px;
}

.w-cell svg {
    margin-bottom: 4px;
}

.g-cells .group-body {
    padding-left: 5px;
}

.edit-list {
    width: 115px;
    margin-top: -2px;
    padding-left: 7px;
}

.edit-row {
    display: flex;
    align-items: center;
    gap: 4px;
    height: 23px;
}

.edit-row svg {
    width: 17px;
}

.edit-row .gap-sum {
    margin-left: 9px;
}

.w-sort { width: 46px; margin-left: 2px; }
.w-find { width: 42px; margin-left: 3px; }

.sort-a, .sort-z {
    font: 700 13px "Liberation Sans", sans-serif;
}

.sort-a { fill: #2f75b5; }
.sort-z { fill: #8e5bb5; }

.collapse {
    position: absolute;
    right: 10px;
    bottom: 5px;
}

/* formula bar */
.formula-bar {
    flex: none;
    height: 42px;
    background: #e6e6e6;
    display: flex;
    align-items: flex-start;
    padding: 11px 6px 0 5px;
}

.name-box, .fx-btns, .fx-input {
    height: 25px;
    background: #fff;
    border: 1px solid #c6c6c6;
}

.name-box {
    width: 101px;
    display: flex;
    align-items: center;
    justify-content: space-between;
    padding: 0 8px 2px 7px;
    font-size: 15px;
    color: #333;
}

.fx-dots {
    width: 31px;
    text-align: center;
    color: #aaa;
    font-size: 14px;
    line-height: 25px;
}

.fx-btns {
    width: 109px;
    display: flex;
    align-items: center;
    gap: 23px;
    padding-left: 13px;
}

.fx-btns em {
    font-family: "Liberation Serif", serif;
    font-size: 14px;
    font-weight: 700;
    color: #555;
}

.fx-input {
    flex: 1;
    margin-left: 4px;
    display: flex;
    align-items: center;
    justify-content: flex-end;
    padding-right: 4px;
}

/* sheet */
.sheet-area {
    flex: none;
    height: 620px;
    display: flex;
    background: #fff;
}

.grid-viewport {
    flex: none;
    width: 1578px;
    height: 620px;
    overflow: hidden;
    border-bottom: 1px solid #a8a8a8;
}

.sheet {
    table-layout: fixed;
    width: 1630px;
    border-collapse: collapse;
    font-size: 14px;
    line-height: 20px;
}

.sheet th, .sheet td {
    padding: 0;
    overflow: hidden;
    white-space: nowrap;
    font-weight: 400;
}

.r-head { height: 26px; }
.r-title { height: 43px; }
.r-months { height: 61px; }
.r-sub { height: 30px; }
.r-data { height: 28px; }

.sheet .corner {
    background: #e6e6e6;
    border-right: 1px solid #a8a8a8;
    border-bottom: 1px solid #a8a8a8;
}

.corner svg {
    margin: 7px 0 0 19px;
}

.sheet .col {
    background: #e6e6e6;
    border-right: 1px solid #c6c6c6;
    border-bottom: 1px solid #a8a8a8;
    font-size: 17px;
    line-height: 18px;
    color: #333;
    padding-top: 6px;
}

.sheet .col.sel {
    background: #d2d2d2;
    color: #217346;
    border-bottom: 2px solid #217346;
}

.sheet .rowno {
    background: #e6e6e6;
    border-right: 1px solid #a8a8a8;
    border-bottom: 1px solid #a8a8a8;
    font-size: 17px;
    line-height: 22px;
    color: #222;
    text-align: center;
    vertical-align: bottom;
    padding-bottom: 1px;
}

.sheet .title {
    text-align: center;
    font-size: 19px;
    color: #222;
    border-bottom: 1px solid #000;
    padding-bottom: 2px;
}

.grid {
    border-right: 1px solid #d4d4d4;
    border-left: 1px solid #d4d4d4;
    border-bottom: 1px solid #d4d4d4;
}

.hd {
    background: #c6e9ff;
    border: 1px solid #000;
    text-align: center;
    color: #222;
    font-size: 15px;
}

.sheet .hd.top {
    vertical-align: top;
    padding-top: 8px;
}

.sheet .note-hd {
    text-align: left;
    padding-left: 27px;
}

.two {
    height: 31px;
    line-height: 31px;
}

.two:first-child {
    margin-top: 1.5px;
}

.two:last-child {
    height: 28px;
}

.spread {
    display: flex;
    justify-content: space-between;
    padding: 0 4px 0 6px;
}

.hd.box {
    border-top: 2px solid #000;
}

.sheet .hd.sub {
    vertical-align: bottom;
    padding-bottom: 4px;
    border-bottom: 0;
    font-size: 14.5px;
}

.sheet .sum {
    background: #b4c6e7;
}

.sheet .tl {
    border-left: 2px solid #000;
}

.data {
    position: relative;
    border-left: 1px solid #000;
    border-right: 1px solid #000;
    border-top: 1px dotted #000;
    border-bottom: 1px dotted #000;
    text-align: center;
    vertical-align: bottom;
    font-size: 14px;
    background: #fff;
}

.sheet .data {
    padding-bottom: 3px;
}

.data.solid {
    border-top: 1px solid #000;
}

.r-end .grid {
    border-top: 2px solid #000;
}

.tri::before {
    content: "";
    position: absolute;
    left: 0;
    top: 0;
    width: 6px;
    height: 6px;
    background: #1e7145;
    clip-path: polygon(0 0, 100% 0, 0 100%);
}

.dim {
    color: #555;
}

.num {
    font-size: 14px;
}

.sheet .data.name {
    text-align: left;
    padding-left: 2px;
    color: #444;
}

.red {
    color: #e02020;
}

.ok {
    color: #222;
}

.mark {
    font-size: 15px;
    font-weight: 700;
}

.sheet .orange {
    background: #ffe699;
}

.sheet .gr {
    background: #a9d08e;
    border-left-color: #a9d08e;
    border-right-color: #a9d08e;
}

.sheet .gr.tl {
    border-left-color: #000;
}

.sheet .black {
    background: #000;
}

.pale {
    color: #e8813a;
}

.ncc {
    color: #e0464e;
    font-size: 14.5px;
}

/* vertical scrollbar */
.vscroll {
    flex: 1;
    display: flex;
    flex-direction: column;
    align-items: center;
    padding: 7px 0 0;
    background: #e6e6e6;
    gap: 0;
}

.vs-btn {
    flex: none;
    width: 15px;
    height: 14px;
    display: flex;
    align-items: center;
    justify-content: center;
    background: #fff;
    border: 1px solid #b4b4b4;
}

.vs-thumb {
    flex: none;
    width: 15px;
    height: 554px;
    margin-bottom: 31px;
    background: #fff;
    border: 1px solid #b4b4b4;
    border-top: 0;
}

/* sheet tabs */
.sheet-tabs {
    flex: none;
    height: 28px;
    display: flex;
    align-items: stretch;
    background: #e6e6e6;
    border-bottom: 1px solid #c6c6c6;
    font-size: 13.5px;
    white-space: nowrap;
}

.tab-nav {
    width: 100px;
    display: flex;
    align-items: center;
    gap: 24px;
    padding-left: 27px;
}

.arrow-l, .arrow-r {
    display: block;
    width: 0;
    height: 0;
    border-top: 4px solid transparent;
    border-bottom: 4px solid transparent;
}

.arrow-l { border-right: 4px solid #bdbdbd; }
.arrow-r { border-left: 4px solid #bdbdbd; }
.arrow-l.dark { border-right-color: #666; }
.arrow-r.dark { border-left-color: #666; }

.sheet-tab {
    display: flex;
    align-items: center;
    justify-content: center;
    margin: 1px 0 0;
    height: 22px;
    align-self: center;
    color: #444;
    border-left: 1px solid #a8a8a8;
    padding: 0;
    width: 63px;
}

.sheet-tab.active {
    height: 27px;
    align-self: flex-start;
    margin: 0;
    padding-top: 2px;
    border: 0;
    border-bottom: 3px solid #217346;
    background: #fff;
    color: #217346;
    font-weight: 700;
    width: 68px;
}

.sheet-tab:nth-child(4) {
    border-left: 0;
    width: 100px;
}

.sheet-tab:nth-child(5) {
    width: 104px;
    border-right: 1px solid #a8a8a8;
}

.tab-add {
    align-self: center;
    margin: 0 0 1px 33px;
}

.tab-grip {
    margin-left: 469px;
    color: #999;
}

.hscroll {
    flex: 1;
    display: flex;
    align-items: center;
    padding: 1px 22px 0 1px;
    margin-left: -9px;
}

.hs-btn {
    flex: none;
    width: 15px;
    height: 14px;
    display: flex;
    align-items: center;
    justify-content: center;
    background: #fff;
    border: 1px solid #a8a8a8;
}

.hs-thumb {
    flex: 1;
    height: 14px;
    background: #fff;
    border-top: 1px solid #b4b4b4;
    border-bottom: 1px solid #b4b4b4;
    border-right: 1px solid #b4b4b4;
}

.hs-track {
    flex: none;
    width: 34px;
    height: 14px;
    background: #d4d4d4;
}

/* status bar */
.statusbar {
    flex: none;
    height: 22px;
    display: flex;
    align-items: center;
    padding-left: 7px;
    background: #f1f1f1;
    font-size: 11px;
    color: #555;
}

.ready {
    width: 45px;
}

.view-btns {
    display: flex;
    align-self: stretch;
    margin-left: 1240px;
}

.view {
    width: 37px;
    display: flex;
    align-items: center;
    justify-content: center;
}

.view.on {
    background: #d2d2d2;
}

.zoom-ctl {
    display: flex;
    align-items: center;
    margin-left: 7px;
}

.z-minus {
    display: block;
    width: 6px;
    height: 2px;
    background: #666;
}

.z-track {
    display: block;
    width: 100px;
    height: 1px;
    margin-left: 4px;
    background: #999;
    position: relative;
}

.z-thumb {
    position: absolute;
    left: 52px;
    top: -5px;
    width: 3px;
    height: 11px;
    background: #666;
}

.z-plus {
    margin-left: 4px;
    font-size: 15px;
    font-weight: 700;
    line-height: 15px;
    color: #666;
}

.z-value {
    margin-left: 15px;
    font-size: 11.5px;
}

/* taskbar */
.taskbar {
    flex: none;
    height: 40px;
    display: flex;
    background: #1f3442;
    color: #fff;
}

.start {
    flex: none;
    width: 48px;
    display: flex;
    align-items: center;
    justify-content: center;
}

.search {
    flex: none;
    width: 288px;
    display: flex;
    align-items: center;
    gap: 12px;
    padding-left: 12px;
    background: #f2f2f2;
    color: #222;
    font-size: 14px;
}

.task {
    flex: none;
    width: 49px;
    display: flex;
    align-items: center;
    justify-content: center;
}

.task.first {
    margin-left: 1px;
    padding-right: 3px;
}

.task.open {
    background: linear-gradient(#76b9ed, #76b9ed) center bottom / 40px 3px no-repeat;
}

.task.active {
    background: #4a5f6c linear-gradient(#76b9ed, #76b9ed) center bottom / 100% 3px no-repeat;
    gap: 1px;
}

.task.line {
    background: #a86a34 linear-gradient(#f07a12, #f07a12) center bottom / 100% 3px no-repeat;
}

.xl-mark {
    width: 14px;
    height: 20px;
    background: #1e6e42;
    font-size: 12px;
    line-height: 20px;
    text-align: center;
}

.line-mark {
    width: 24px;
    height: 24px;
    display: flex;
    align-items: center;
    justify-content: center;
    border-radius: 4px;
    background: #0cb400;
}

.line-mark b {
    width: 18px;
    height: 14px;
    border-radius: 8px;
    background: #fff;
    color: #0cb400;
    font: 700 5px/14px "Liberation Sans", sans-serif;
    text-align: center;
}

.tray {
    flex: 1;
    display: flex;
    align-items: center;
    padding-left: 522px;
    white-space: nowrap;
}

.sun {
    flex: none;
    width: 20px;
    height: 20px;
    border-radius: 50%;
    background: linear-gradient(160deg, #f6a52a, #ea6a10);
}

.temp {
    margin-left: 10px;
    font-size: 14px;
}

.weather {
    margin-left: 8px;
    font-size: 12px;
    font-weight: 700;
}

.t-up { margin-left: 23px; }
.t-meet { margin-left: 10px; }
.t-vol { margin-left: 7px; }
.t-net { margin-left: 9px; }
.t-kbd { margin-left: 9px; }

.lang {
    margin-left: 14px;
    font-size: 12px;
}

.clock {
    width: 60px;
    margin-left: 9px;
    display: flex;
    flex-direction: column;
    align-items: center;
    font-size: 12.5px;
    line-height: 18px;
}

.notify {
    position: relative;
    margin-left: 11px;
}

.badge {
    position: absolute;
    left: 7px;
    top: 6px;
    width: 15px;
    height: 15px;
    border-radius: 50%;
    background: #1f3442;
    border: 1px solid #999;
    font-size: 10px;
    line-height: 13px;
    text-align: center;
}

/* activation notice */
.watermark {
    position: absolute;
    left: 1304px;
    top: 775px;
    display: flex;
    flex-direction: column;
    color: rgba(90, 90, 90, .42);
    white-space: nowrap;
    pointer-events: none;
}

.wm-big {
    font-size: 19px;
    line-height: 26px;
}

.wm-small {
    font-size: 14.5px;
    line-height: 18px;
}
```
